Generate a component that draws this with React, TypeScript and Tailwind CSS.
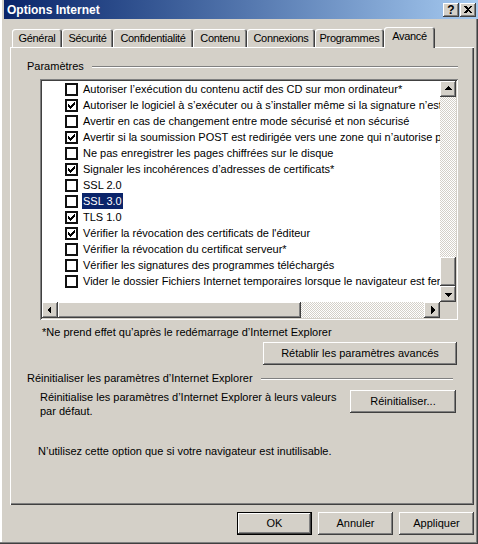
import React from 'react';

const raised = "shadow-[inset_-1px_-1px_#404040,inset_1px_1px_#ffffff,inset_-2px_-2px_#808080,inset_2px_2px_#D4D0C8]";
const hatch = "bg-[image:repeating-conic-gradient(#D4D0C8_0_25%,#ffffff_0_50%)] bg-[length:2px_2px]";

const tabs = [
    { label: 'Général', w: 'w-[50px]' },
    { label: 'Sécurité', w: 'w-[51px]' },
    { label: 'Confidentialité', w: 'w-[80px]' },
    { label: 'Contenu', w: 'w-[54px]' },
    { label: 'Connexions', w: 'w-[68px]' },
    { label: 'Programmes', w: 'w-[69px]' },
];

const items = [
    { label: 'Autoriser l’exécution du contenu actif des CD sur mon ordinateur*', checked: false },
    { label: 'Autoriser le logiciel à s’exécuter ou à s’installer même si la signature n’est pas valide', checked: true },
    { label: 'Avertir en cas de changement entre mode sécurisé et non sécurisé', checked: false },
    { label: 'Avertir si la soumission POST est redirigée vers une zone qui n’autorise pas les publications', checked: true },
    { label: 'Ne pas enregistrer les pages chiffrées sur le disque', checked: false },
    { label: 'Signaler les incohérences d’adresses de certificats*', checked: true },
    { label: 'SSL 2.0', checked: false },
    { label: 'SSL 3.0', checked: false, selected: true },
    { label: 'TLS 1.0', checked: true },
    { label: "Vérifier la révocation des certificats de l'éditeur", checked: true },
    { label: 'Vérifier la révocation du certificat serveur*', checked: false },
    { label: 'Vérifier les signatures des programmes téléchargés', checked: false },
    { label: 'Vider le dossier Fichiers Internet temporaires lorsque le navigateur est fermé', checked: false },
];

const Arrow = ({ dir }: { dir: 'up' | 'down' | 'left' | 'right' }) => {
    const pts = {
        up: '4,9 8,5 12,9',
        down: '4,7 12,7 8,11',
        left: '9,4 9,12 5,8',
        right: '7,4 7,12 11,8',
    }[dir];
    return (
        <svg width="16" height="16" viewBox="0 0 16 16" shapeRendering="crispEdges">
            <polygon points={pts} fill="#000" />
        </svg>
    );
};

const ScrollBtn = ({ dir }: { dir: 'up' | 'down' | 'left' | 'right' }) => (
    <div className={`w-[16px] h-[16px] shrink-0 bg-[#D4D0C8] ${raised}`}>
        <Arrow dir={dir} />
    </div>
);

const CheckBox = ({ checked }: { checked: boolean }) => (
    <div className="w-[13px] h-[13px] shrink-0 bg-white border-2 border-[#111]">
        {checked && (
            <svg width="9" height="9" viewBox="0 0 9 9" shapeRendering="crispEdges">
                <path d="M1 3v3l2 2 5-5V0L3 5z" fill="#000" />
            </svg>
        )}
    </div>
);

const Button = ({ label, w, isDefault }: { label: string; w: string; isDefault?: boolean }) => (
    <div
        className={`${w} h-[23px] flex items-center justify-center bg-[#D4D0C8] ${
            isDefault
                ? 'border border-black shadow-[inset_-1px_-1px_#404040,inset_1px_1px_#ffffff,inset_-2px_-2px_#808080]'
                : raised
        }`}
    >
        {label}
    </div>
);

const GroupTitle = ({ label, pr }: { label: string; pr: string }) => (
    <div className={`flex items-center pl-[17px] ${pr} h-[13px] leading-[13px]`}>
        <span className="whitespace-nowrap">{label}</span>
        <div className="flex-1 ml-[8px] h-[2px] border-t border-t-[#808080] border-b border-b-white" />
    </div>
);

export default function App() {
    return (
        <div className="w-[478px] h-[544px] bg-[#D4D0C8] flex flex-col pl-[4px] font-['Liberation_Sans',Arial,sans-serif] text-[11px] text-black shadow-[inset_-1px_-1px_#404040,inset_-2px_-2px_#808080,inset_2px_0_#ffffff] overflow-hidden">
            {/* title bar */}
            <div className="h-[19px] shrink-0 flex items-center justify-between pl-[3px] pr-[2px] bg-gradient-to-r from-[#0A246A] to-[#A6CAF0]">
                <span className="text-white font-bold text-[12px]">Options Internet</span>
                <div className="flex gap-[1px]">
                    <div className={`w-[16px] h-[14px] flex items-center justify-center bg-[#D4D0C8] font-bold text-[12px] leading-none ${raised}`}>?</div>
                    <div className={`w-[16px] h-[14px] flex items-center justify-center bg-[#D4D0C8] ${raised}`}>
                        <svg width="8" height="7" viewBox="0 0 8 7" shapeRendering="crispEdges">
                            <path d="M0 0h2l2 2 2-2h2L5 3.5 8 7H6L4 5 2 7H0l3-3.5z" fill="#000" />
                        </svg>
                    </div>
                </div>
            </div>

            {/* tabs */}
            <div className="mt-[8px] ml-[8px] h-[20px] flex items-end relative z-10 tracking-[-0.3px]">
                {tabs.map((t) => (
                    <div
                        key={t.label}
                        className={`${t.w} h-[18px] flex items-center justify-center whitespace-nowrap rounded-t-[3px] shadow-[inset_1px_1px_#ffffff,inset_-1px_0_#404040,inset_-2px_0_#808080]`}
                    >
                        {t.label}
                    </div>
                ))}
                <div className="w-[51px] h-[21px] -mb-[1px] pb-[3px] flex items-center justify-center bg-[#D4D0C8] rounded-t-[3px] shadow-[inset_1px_1px_#ffffff,inset_-1px_0_#404040,inset_-2px_0_#808080]">
                    Avancé
                </div>
            </div>

            {/* panel */}
            <div className="ml-[6px] w-[464px] h-[458px] shrink-0 flex flex-col pt-[13px] shadow-[inset_1px_1px_#ffffff,inset_-1px_-1px_#404040,inset_-2px_-2px_#808080]">
                <GroupTitle label="Paramètres" pr="pr-[16px]" />

                {/* list box */}
                <div className="ml-[30px] mt-[6px] w-[418px] h-[241px] p-[2px] bg-white shadow-[inset_1px_1px_#808080,inset_-1px_-1px_#ffffff,inset_2px_2px_#404040,inset_-2px_-2px_#D4D0C8]">
                    <div className="flex h-[221px]">
                        <div className="w-[398px] overflow-hidden">
                            {items.map((it) => (
                                <div key={it.label} className="h-[16px] flex items-center pl-[23px] whitespace-nowrap">
                                    <CheckBox checked={it.checked} />
                                    <span
                                        className={`ml-[4px] px-[1px] leading-[16px] ${
                                            it.selected ? 'bg-[#0A246A] text-white' : ''
                                        }`}
                                    >
                                        {it.label}
                                    </span>
                                </div>
                            ))}
                        </div>
                        <div className="w-[16px] flex flex-col">
                            <ScrollBtn dir="up" />
                            <div className={`h-[160px] ${hatch}`} />
                            <div className={`h-[29px] bg-[#D4D0C8] ${raised}`} />
                            <ScrollBtn dir="down" />
                        </div>
                    </div>
                    <div className="flex h-[16px]">
                        <ScrollBtn dir="left" />
                        <div className={`w-[243px] bg-[#D4D0C8] ${raised}`} />
                        <div className={`w-[123px] ${hatch}`} />
                        <ScrollBtn dir="right" />
                        <div className="w-[16px] bg-[#D4D0C8]" />
                    </div>
                </div>

                <div className="ml-[32px] mt-[6px] leading-[13px]">
                    *Ne prend effet qu’après le redémarrage d’Internet Explorer
                </div>

                <div className="mt-[3px] mr-[17px] self-end">
                    <Button label="Rétablir les paramètres avancés" w="w-[194px]" />
                </div>

                <div className="mt-[7px]">
                    <GroupTitle label="Réinitialiser les paramètres d’Internet Explorer" pr="pr-[21px]" />
                </div>

                <div className="mt-[5px] flex justify-between pl-[30px] pr-[18px]">
                    <div className="leading-[14px]">
                        Réinitialise les paramètres d’Internet Explorer à leurs valeurs
                        <br />
                        par défaut.
                    </div>
                    <Button label="Réinitialiser..." w="w-[106px]" />
                </div>

                <div className="ml-[28px] mt-[27px] leading-[13px]">
                    N’utilisez cette option que si votre navigateur est inutilisable.
                </div>
            </div>

            {/* dialog buttons */}
            <div className="mt-[7px] flex justify-end gap-[6px] pr-[4px]">
                <Button label="OK" w="w-[75px]" isDefault />
                <Button label="Annuler" w="w-[75px]" />
                <Button label="Appliquer" w="w-[75px]" />
            </div>
        </div>
    );
}
